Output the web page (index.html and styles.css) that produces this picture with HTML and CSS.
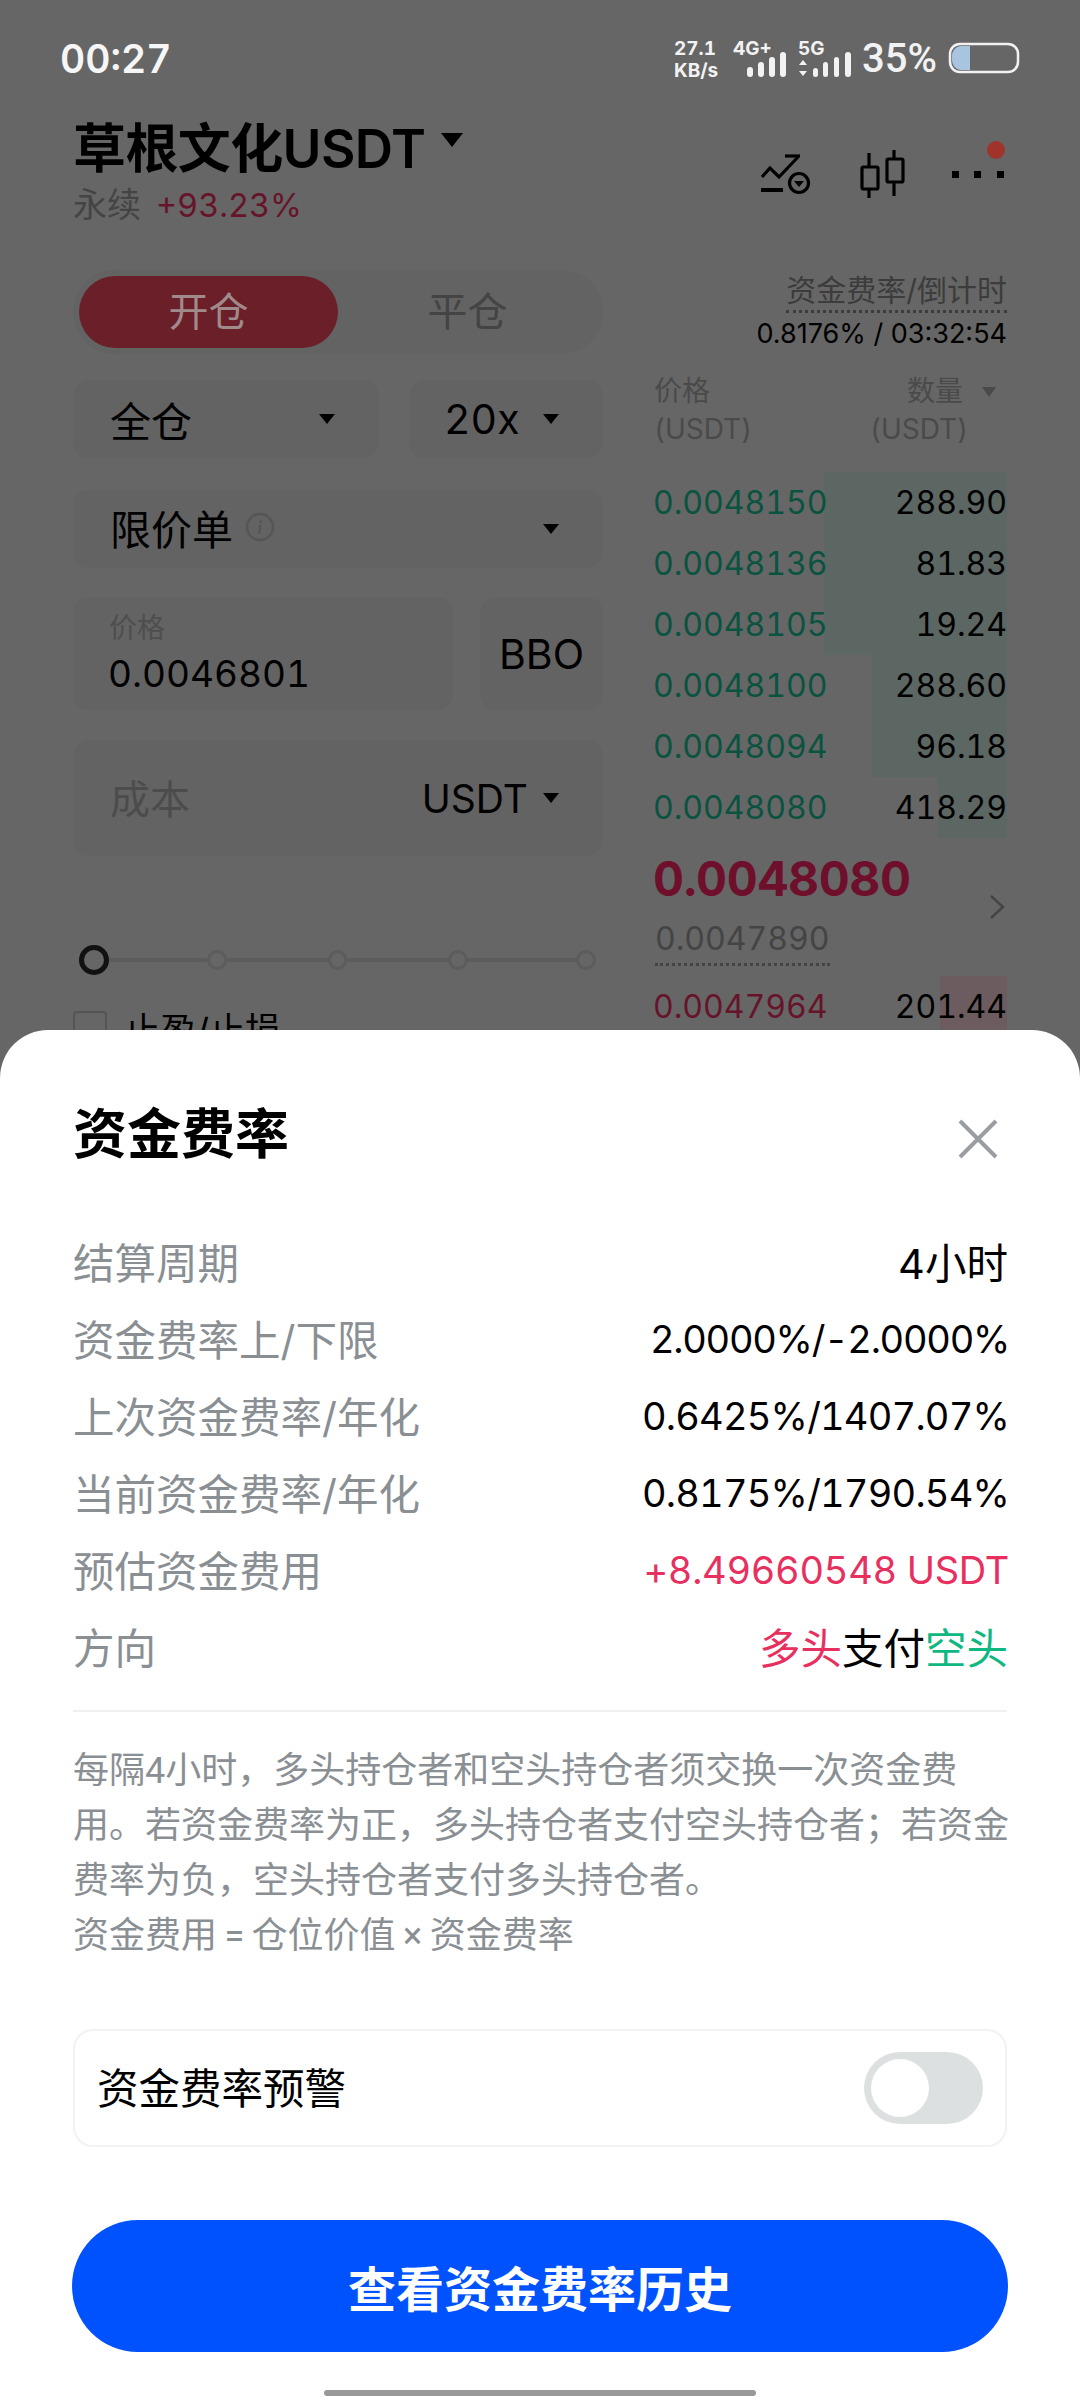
FILE: index.html
```html
<!DOCTYPE html>
<html lang="zh-CN">
<head>
  <meta charset="UTF-8" />
  <meta name="viewport" content="width=device-width, initial-scale=1.0"/>
  <title>资金费率</title>
  <link rel="stylesheet" href="styles.css">
</head>
<body>
  <div class="screen">
    <div class="status">
      <span class="time">00:27</span>
      <svg class="status-icons" viewBox="0 -15 360 70" width="360" height="70">
        <text x="0" y="16" class="net">27.1</text>
        <text x="0" y="38" class="net">KB/s</text>
        <text x="59" y="16" class="net">4G+</text>
        <g fill="#f2f2f2">
          <rect x="73" y="28" width="6" height="10" rx="3"/>
          <rect x="84" y="23" width="6" height="15" rx="3"/>
          <rect x="95" y="18" width="6" height="20" rx="3"/>
          <rect x="106" y="13" width="6" height="25" rx="3"/>
          <rect x="139" y="29" width="5" height="9" rx="2.5"/>
          <rect x="149" y="23" width="5" height="15" rx="2.5"/>
          <rect x="160" y="18" width="5" height="20" rx="2.5"/>
          <rect x="171" y="13" width="6" height="25" rx="3"/>
          <path d="M125 26l4-5 4 5zM125 32l4 5 4-5z"/>
        </g>
        <text x="124" y="16" class="net">5G</text>
        <text x="188" y="33" class="pct">35%</text>
        <rect x="276" y="5" width="68" height="28" rx="10" fill="none" stroke="#f2f2f2" stroke-width="2.5"/>
        <path d="M278 17a10 10 0 0 1 8-10h10v24h-10a10 10 0 0 1-8-10z" fill="#a8c4de"/>
        <rect x="343" y="14" width="2" height="10" fill="#f2f2f2"/>
      </svg>
    </div>

    <header class="head">
      <div>
        <h1 class="pair">草根文化USDT<span class="pair-caret"></span></h1>
        <div class="pair-sub">永续<span class="pair-change">+93.23%</span></div>
      </div>
      <svg class="head-icons" viewBox="0 0 267 80" width="267" height="80">
        <g fill="none" stroke="#000" stroke-width="3.2">
          <path d="M22 47l8-9 9 9 19-20"/>
          <path d="M45 26h15"/>
          <path d="M21 60h22" stroke-width="4"/>
          <circle cx="59" cy="53" r="9.5"/>
          <path d="M129 23v14M129 59v9M154 20v9M154 52v14"/>
          <rect x="122" y="37" width="16" height="22" rx="1.5"/>
          <rect x="147" y="29" width="16" height="23" rx="1.5"/>
        </g>
        <path d="M54 51h10l-5 6z"/>
        <rect x="212" y="41" width="7" height="7"/>
        <rect x="234" y="41" width="7" height="7"/>
        <rect x="257" y="41" width="7" height="7"/>
        <circle cx="256" cy="20" r="9" fill="#a0342b"/>
      </svg>
    </header>

    <main class="trade">
      <section class="form">
        <div class="tabs">
          <div class="tab tab-on">开仓</div>
          <div class="tab">平仓</div>
        </div>

        <div class="form-row row-margin">
          <div class="field field-margin">全仓<span class="caret"></span></div>
          <div class="field field-lever">20x<span class="caret"></span></div>
        </div>

        <div class="field field-type">
          <span class="type-label">限价单
            <svg class="info" viewBox="0 0 30 30" width="30" height="30">
              <circle cx="15" cy="15" r="13" fill="none" stroke="#555" stroke-width="2.4"/>
              <path d="M15.5 8.5v2.6M15.2 13l-1 9" fill="none" stroke="#555" stroke-width="2.4"/>
            </svg>
          </span>
          <span class="caret"></span>
        </div>

        <div class="form-row price-row">
          <div class="field field-price">
            <div class="price-label">价格</div>
            <div class="price-value">0.0046801</div>
          </div>
          <div class="field field-bbo">BBO</div>
        </div>

        <div class="field field-cost">
          <span class="cost-label">成本</span>
          <span class="cost-unit">USDT<span class="caret"></span></span>
        </div>

        <div class="slider">
          <span class="knob"></span>
          <span class="stop"></span>
          <span class="stop"></span>
          <span class="stop"></span>
          <span class="stop"></span>
        </div>

        <div class="tpsl">
          <span class="check"></span>
          <span>止盈/止损</span>
        </div>
      </section>

      <section class="book">
        <div class="funding">
          <span class="funding-label">资金费率/倒计时</span>
          <div class="funding-value">0.8176% / 03:32:54</div>
        </div>

        <div class="book-head">
          <div>价格<br>(USDT)</div>
          <div class="book-head-right">数量<span class="caret caret-grey"></span><br><span class="head-unit">(USDT)</span></div>
        </div>

        <div class="book-row">
          <span class="bar bar-green" style="width:183px"></span>
          <span class="price-green">0.0048150</span><span>288.90</span>
        </div>
        <div class="book-row">
          <span class="bar bar-green" style="width:183px"></span>
          <span class="price-green">0.0048136</span><span>81.83</span>
        </div>
        <div class="book-row">
          <span class="bar bar-green" style="width:183px"></span>
          <span class="price-green">0.0048105</span><span>19.24</span>
        </div>
        <div class="book-row">
          <span class="bar bar-green" style="width:135px"></span>
          <span class="price-green">0.0048100</span><span>288.60</span>
        </div>
        <div class="book-row">
          <span class="bar bar-green" style="width:135px"></span>
          <span class="price-green">0.0048094</span><span>96.18</span>
        </div>
        <div class="book-row">
          <span class="bar bar-green" style="width:69px"></span>
          <span class="price-green">0.0048080</span><span>418.29</span>
        </div>

        <div class="book-mid">
          <div>
            <div class="last-price">0.0048080</div>
            <div class="mark-price">0.0047890</div>
          </div>
          <svg class="chevron" viewBox="0 0 16 26" width="16" height="26">
            <path d="M2 2l12 11L2 24" fill="none" stroke="#444" stroke-width="2.4"/>
          </svg>
        </div>

        <div class="book-row">
          <span class="bar bar-red" style="width:67px"></span>
          <span class="price-red">0.0047964</span><span>201.44</span>
        </div>
      </section>
    </main>

    <div class="sheet">
      <div class="sheet-head">
        <h2 class="sheet-title">资金费率</h2>
        <svg class="close" viewBox="0 0 40 40" width="40" height="40">
          <path d="M2 2l36 36M38 2L2 38" fill="none" stroke="#9a9ea2" stroke-width="4"/>
        </svg>
      </div>

      <div class="info-list">
        <div class="info-row"><span class="info-key">结算周期</span><span class="info-text">4小时</span></div>
        <div class="info-row"><span class="info-key">资金费率上/下限</span><span class="info-val rate-tight">2.0000%/-2.0000%</span></div>
        <div class="info-row"><span class="info-key">上次资金费率/年化</span><span class="info-val rate">0.6425%/1407.07%</span></div>
        <div class="info-row"><span class="info-key">当前资金费率/年化</span><span class="info-val rate">0.8175%/1790.54%</span></div>
        <div class="info-row"><span class="info-key">预估资金费用</span><span class="info-val text-red">+8.49660548 USDT</span></div>
        <div class="info-row"><span class="info-key">方向</span><span class="info-text"><span class="text-red">多头</span>支付<span class="text-green">空头</span></span></div>
      </div>

      <div class="divider"></div>

      <p class="desc">每隔4小时，多头持仓者和空头持仓者须交换一次资金费<br>用。若资金费率为正，多头持仓者支付空头持仓者；若资金<br>费率为负，空头持仓者支付多头持仓者。<br>资金费用 = 仓位价值 × 资金费率</p>

      <div class="alert-card">
        <span class="alert-label">资金费率预警</span>
        <span class="toggle"><span class="toggle-knob"></span></span>
      </div>

      <button class="history-btn">查看资金费率历史</button>
      <div class="home-bar"></div>
    </div>
  </div>
</body>
</html>
```

FILE: styles.css
```css
* {
  margin: 0;
  padding: 0;
  box-sizing: border-box;
  font-family: Inter, "Noto Sans CJK SC", sans-serif;
  font-variant-numeric: tabular-nums;
}

body {
  background-color: #666;
  color: #000;
}

.screen {
  position: relative;
  width: 1080px;
  height: 2400px;
  overflow: hidden;
  background-color: #666;
}

/* status bar */
.status {
  display: flex;
  justify-content: space-between;
  align-items: center;
  height: 116px;
  padding: 0 60px;
}

.time {
  color: #f6f6f6;
  font-size: 39px;
  font-weight: 600;
}

.status-icons {
  margin-right: -14px;
  margin-top: 1px;
}

.net {
  fill: #f2f2f2;
  font-size: 19px;
  font-weight: 700;
}

.pct {
  fill: #f2f2f2;
  font-family: Roboto, sans-serif;
  font-size: 40px;
  font-weight: 500;
}

/* pair header */
.head {
  display: flex;
  justify-content: space-between;
  align-items: flex-start;
  padding: 0 73px;
}

.pair {
  display: flex;
  height: 64px;
  font-size: 53px;
  font-weight: 600;
  line-height: 66px;
  letter-spacing: -0.6px;
}

.pair-caret {
  width: 0;
  height: 0;
  margin: 17px 0 0 16px;
  border-left: 11px solid transparent;
  border-right: 11px solid transparent;
  border-top: 14px solid #000;
}

.pair-sub {
  height: 46px;
  color: #444;
  font-size: 34px;
  line-height: 49px;
}

.pair-change {
  margin-left: 15px;
  color: #661429;
  font-size: 32.5px;
}

.head-icons {
  margin-top: 14px;
}

/* trade area */
.trade {
  display: grid;
  grid-template-columns: 530px 352px;
  gap: 52px;
  padding: 44px 73px 0;
}

.tabs {
  display: flex;
  height: 84px;
  padding: 6px;
  border-radius: 42px;
  background-color: #636363;
}

.tab {
  width: 260px;
  border-radius: 36px;
  color: #444;
  font-size: 40px;
  line-height: 72px;
  text-align: center;
}

.tab-on {
  background-color: #6b1f28;
  color: #a08a8c;
}

.form-row {
  display: flex;
  justify-content: space-between;
}

.row-margin {
  margin-top: 26px;
}

.field {
  display: flex;
  justify-content: space-between;
  align-items: center;
  padding: 0 37px;
  border-radius: 16px;
  background-color: #636363;
  font-size: 41px;
}

.caret {
  display: inline-block;
  width: 0;
  height: 0;
  border-left: 8px solid transparent;
  border-right: 8px solid transparent;
  border-top: 10px solid #000;
}

.caret-grey {
  margin-left: 19px;
  border-left-width: 7px;
  border-right-width: 7px;
  border-top-color: #4a4a4a;
  vertical-align: 4px;
}

.field-margin {
  width: 306px;
  height: 78px;
  padding-right: 44px;
}

.field-lever {
  width: 194px;
  height: 78px;
  padding-right: 44px;
  padding-left: 35px;
}

.field-type {
  height: 78px;
  margin-top: 32px;
  padding-right: 44px;
}

.type-label {
  display: flex;
  align-items: center;
  gap: 12px;
  margin-top: -4px;
}

.price-row {
  margin-top: 29px;
}

.field-price {
  display: block;
  width: 380px;
  height: 113px;
  padding: 12px 36px 0;
}

.price-label {
  height: 38px;
  color: #4e4e4e;
  font-size: 28px;
  line-height: 38px;
}

.price-value {
  height: 50px;
  margin-top: 2px;
  margin-left: -1px;
  font-size: 37px;
  line-height: 50px;
}

.field-bbo {
  width: 123px;
  height: 113px;
  justify-content: center;
  padding: 0;
}

.field-cost {
  height: 116px;
  margin-top: 30px;
  padding-right: 44px;
}

.cost-label {
  margin-top: -2px;
  color: #4c4c4c;
  font-size: 40px;
}

.cost-unit {
  display: flex;
  align-items: center;
  gap: 15px;
  font-size: 39px;
}

/* slider */
.slider {
  display: flex;
  align-items: center;
  height: 30px;
  margin: 89px 7px 0 6px;
  background: linear-gradient(#5c5c5c, #5c5c5c) center / 100% 4px no-repeat;
}

.knob {
  width: 30px;
  height: 30px;
  margin-right: -3px;
  border: 5px solid #111;
  border-radius: 50%;
  background-color: #666;
}

.stop {
  width: 20px;
  height: 20px;
  margin-left: 101px;
  border: 3px solid #5c5c5c;
  border-radius: 50%;
  background-color: #666;
}

.stop:last-child {
  margin-left: 108px;
}

.tpsl {
  display: flex;
  gap: 17px;
  align-items: center;
  height: 34px;
  margin-top: 36px;
  font-size: 36px;
}

.check {
  width: 34px;
  height: 34px;
  border: 2px solid #555;
  border-radius: 4px;
}

/* order book */
.book {
  font-size: 32px;
}

.funding {
  height: 82px;
  text-align: right;
}

.funding-label {
  display: inline-block;
  height: 42px;
  border-bottom: 3px dotted #3c3c3c;
  color: #3c3c3c;
  font-size: 30px;
  line-height: 38px;
}

.funding-value {
  height: 36px;
  margin-top: 3px;
  font-size: 27px;
  font-variant-numeric: normal;
  line-height: 36px;
}

.book-head {
  display: flex;
  justify-content: space-between;
  height: 120px;
  padding-top: 20px;
  margin-left: -1px;
  color: #4a4a4a;
  font-size: 28px;
  line-height: 38px;
}

.book-head-right {
  text-align: left;
  margin-right: 11px;
}

.head-unit {
  margin-left: -37px;
}

.book-row {
  position: relative;
  display: flex;
  justify-content: space-between;
  align-items: center;
  height: 61px;
}

.book-row > span:not(.bar) {
  position: relative;
}

.bar {
  position: absolute;
  top: 0;
  right: 0;
  bottom: 0;
}

.bar-green {
  background-color: #5c6662;
}

.bar-red {
  background-color: #6c5c5f;
}

.price-green {
  margin-left: -2px;
  color: #0a5340;
}

.price-red {
  margin-left: -2px;
  color: #661429;
}

.book-mid {
  display: flex;
  justify-content: space-between;
  align-items: center;
  height: 138px;
  padding-right: 2px;
}

.last-price {
  height: 56px;
  margin-left: -2px;
  margin-top: 2px;
  color: #6e0f2c;
  font-size: 48px;
  font-weight: 700;
  letter-spacing: -0.4px;
  line-height: 56px;
}

.mark-price {
  display: inline-block;
  height: 47px;
  margin-top: 12px;
  border-bottom: 3px dotted #444;
  color: #444;
  line-height: 40px;
}

/* bottom sheet */
.sheet {
  position: absolute;
  left: 0;
  right: 0;
  bottom: 0;
  height: 1370px;
  padding: 72px 73px 0;
  border-radius: 48px 48px 0 0;
  background-color: #fff;
}

.sheet-head {
  display: flex;
  justify-content: space-between;
  align-items: center;
  height: 66px;
}

.sheet-title {
  font-size: 54px;
  font-weight: 700;
  line-height: 72px;
}

.close {
  margin: 8px 9px 0 0;
}

.info-list {
  margin-top: 54px;
}

.info-row {
  display: flex;
  justify-content: space-between;
  align-items: center;
  height: 77px;
}

.info-key {
  color: #8a8f94;
  font-size: 41.5px;
}

.info-val {
  margin-right: -2px;
  padding-top: 2px;
  font-size: 38px;
  letter-spacing: -0.3px;
}

.rate {
  letter-spacing: -0.8px;
}

.rate-tight {
  letter-spacing: -1.3px;
}

.info-text {
  margin-right: -1px;
  font-size: 41.5px;
}

.text-red {
  color: #e8305f;
}

.text-green {
  color: #0fb880;
}

.divider {
  height: 2px;
  margin-top: 26px;
  background-color: #f0f0f0;
}

.desc {
  margin-top: 32px;
  color: #8a8f94;
  font-family: Roboto, "Noto Sans CJK SC", sans-serif;
  font-size: 36px;
  line-height: 55px;
  white-space: nowrap;
  word-spacing: -1.5px;
}

.alert-card {
  display: flex;
  justify-content: space-between;
  align-items: center;
  height: 118px;
  margin-top: 65px;
  padding: 0 22px;
  border: 2px solid #f2f2f2;
  border-radius: 20px;
  font-size: 41.5px;
}

.alert-label {
  margin-top: -5px;
}

.toggle {
  display: flex;
  align-items: center;
  width: 119px;
  height: 72px;
  padding-left: 7px;
  border-radius: 36px;
  background-color: #dde0e1;
}

.toggle-knob {
  width: 58px;
  height: 58px;
  border-radius: 50%;
  background-color: #fff;
}

.history-btn {
  display: block;
  width: 936px;
  height: 132px;
  margin: 73px 0 0 -1px;
  border: none;
  border-radius: 66px;
  background-color: #0052ff;
  color: #fff;
  font-size: 48px;
  font-weight: 700;
}

.home-bar {
  width: 432px;
  height: 6px;
  margin: 38px auto 0;
  border-radius: 3px;
  background-color: #999;
}
```
